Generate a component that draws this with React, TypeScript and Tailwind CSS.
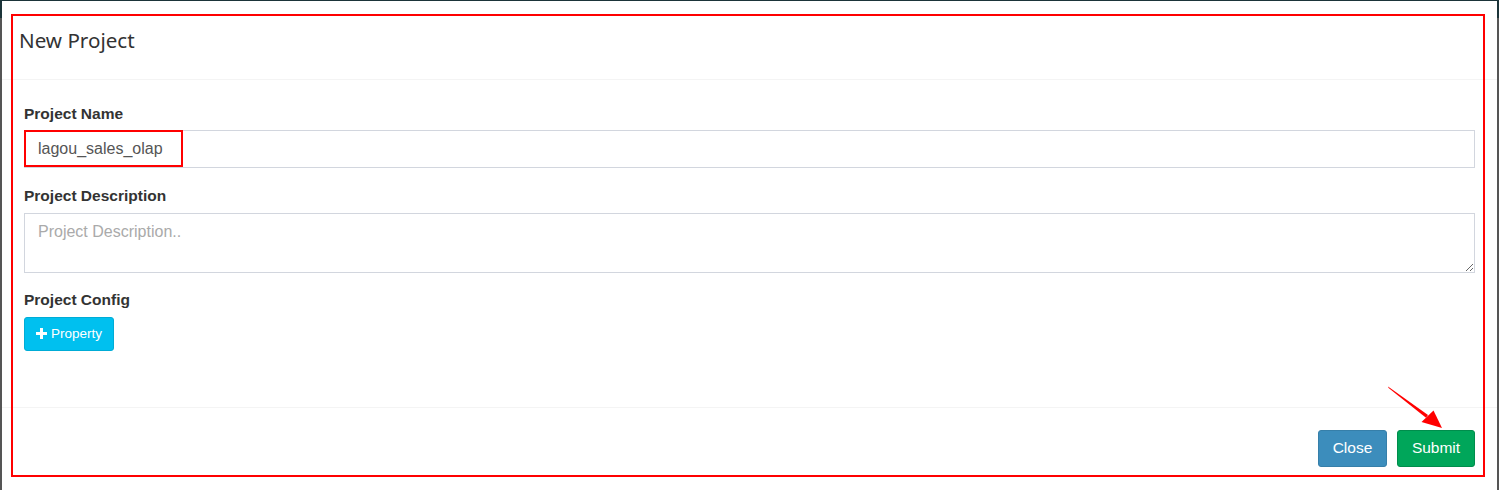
export default function App() {
  return (
    <div
      className="relative h-[490px] w-full overflow-hidden bg-[linear-gradient(to_bottom,#1b3439_18px,#555555_18px)] px-[2px] pt-[1px]"
      style={{ fontFamily: '"Liberation Sans", Arial, sans-serif' }}
    >
      {/* MODAL */}
      <div className="flex h-[489px] flex-col bg-white">
        {/* HEADER */}
        <div className="h-[79px] shrink-0 border-b border-[#f4f4f4] pl-[17px] pt-[25px]">
          <h4
            className="text-[20.6px] leading-[28px] font-normal text-[#333]"
            style={{ fontFamily: '"Noto Sans", "Open Sans", sans-serif' }}
          >
            New Project
          </h4>
        </div>

        {/* BODY */}
        <div className="h-[327px] shrink-0 px-[22px] pt-[23px]">
          <label className="mb-[5px] block text-[15.5px] leading-[22px] font-bold text-[#333]">
            Project Name
          </label>
          <input
            readOnly
            value="lagou_sales_olap"
            className="mb-[17px] block h-[38px] w-full border border-[#d2d6de] pl-[13px] text-[16px] text-[#555] outline-none"
          />

          <label className="mb-[6px] block text-[15.5px] leading-[22px] font-bold text-[#333]">
            Project Description
          </label>
          <textarea
            readOnly
            placeholder="Project Description.."
            className="mb-[16px] block h-[60px] w-full border border-[#d2d6de] px-[13px] py-[6px] text-[16px] leading-[23px] text-[#555] outline-none placeholder:text-[#aaaaaa]"
          />

          <label className="mb-[6px] block text-[15.5px] leading-[22px] font-bold text-[#333]">
            Project Config
          </label>
          <button className="flex h-[34px] w-[90px] items-center gap-[4px] rounded-[3px] border border-[#00acd6] bg-[#00c0ef] pl-[11px] text-[13.5px] text-white">
            <svg width="11" height="11" viewBox="0 0 11 11" className="mb-[1px]">
              <path d="M4 0h3v4h4v3H7v4H4V7H0V4h4z" fill="#ffffff" />
            </svg>
            Property
          </button>
        </div>

        {/* FOOTER */}
        <div className="flex flex-1 justify-end gap-[10px] border-t border-[#f4f4f4] pr-[22px] pt-[22px]">
          <button className="h-[37px] w-[69px] rounded-[3px] border border-[#367fa9] bg-[#3c8dbc] pb-[1px] text-[15.5px] text-white">
            Close
          </button>
          <button className="h-[37px] w-[78px] rounded-[3px] border border-[#008d4c] bg-[#00a65a] pb-[1px] text-[15.5px] text-white">
            Submit
          </button>
        </div>
      </div>

      {/* ANNOTATIONS */}
      <div className="pointer-events-none absolute left-[11px] top-[14px] h-[463px] w-[1474px] border-2 border-[#ff0000]" />
      <div className="pointer-events-none absolute left-[24px] top-[130px] h-[37px] w-[159px] border-2 border-[#ff0000]" />
      <svg
        className="pointer-events-none absolute left-[1380px] top-[380px]"
        width="70"
        height="55"
        viewBox="1380 380 70 55"
      >
        <polygon points="1388,386.5 1388.6,388 1426,417.8 1428,415" fill="#ff0000" />
        <polygon points="1442,428 1421.5,422 1433.5,410.5" fill="#ff0000" />
      </svg>
    </div>
  );
}
